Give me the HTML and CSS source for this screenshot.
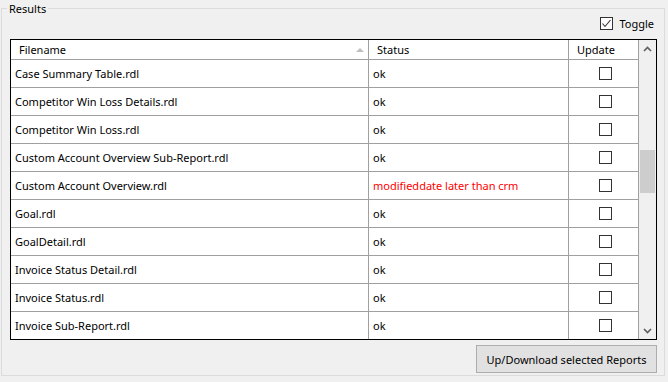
FILE: index.html
```html
<!DOCTYPE html>
<html lang="en">
<head>
    <meta charset="UTF-8">
    <meta name="viewport" content="width=device-width, initial-scale=1.0">
    <title>Results</title>
    <link rel="stylesheet" href="styles.css">
</head>
<body>

    <div class="page">
        <fieldset class="results">
            <legend>Results</legend>

            <div class="toggle-row">
                <label class="toggle">
                    <span class="check">
                        <svg width="11" height="11" viewBox="0 0 11 11"><polyline points="1.5,5.5 4,8.5 9.5,2" fill="none" stroke="#333" stroke-width="1.1"/></svg>
                    </span>
                    <span>Toggle</span>
                </label>
            </div>

            <div class="grid">
                <div class="table">
                    <div class="row head">
                        <div class="cell name"><span>Filename</span><span class="sort"></span></div>
                        <div class="cell status">Status</div>
                        <div class="cell update">Update</div>
                    </div>
                    <div class="row">
                        <div class="cell name">Case Summary Table.rdl</div>
                        <div class="cell status">ok</div>
                        <div class="cell update"><span class="check"></span></div>
                    </div>
                    <div class="row">
                        <div class="cell name">Competitor Win Loss Details.rdl</div>
                        <div class="cell status">ok</div>
                        <div class="cell update"><span class="check"></span></div>
                    </div>
                    <div class="row">
                        <div class="cell name">Competitor Win Loss.rdl</div>
                        <div class="cell status">ok</div>
                        <div class="cell update"><span class="check"></span></div>
                    </div>
                    <div class="row">
                        <div class="cell name">Custom Account Overview Sub-Report.rdl</div>
                        <div class="cell status">ok</div>
                        <div class="cell update"><span class="check"></span></div>
                    </div>
                    <div class="row">
                        <div class="cell name">Custom Account Overview.rdl</div>
                        <div class="cell status error">modifieddate later than crm</div>
                        <div class="cell update"><span class="check"></span></div>
                    </div>
                    <div class="row">
                        <div class="cell name">Goal.rdl</div>
                        <div class="cell status">ok</div>
                        <div class="cell update"><span class="check"></span></div>
                    </div>
                    <div class="row">
                        <div class="cell name">GoalDetail.rdl</div>
                        <div class="cell status">ok</div>
                        <div class="cell update"><span class="check"></span></div>
                    </div>
                    <div class="row">
                        <div class="cell name">Invoice Status Detail.rdl</div>
                        <div class="cell status">ok</div>
                        <div class="cell update"><span class="check"></span></div>
                    </div>
                    <div class="row">
                        <div class="cell name">Invoice Status.rdl</div>
                        <div class="cell status">ok</div>
                        <div class="cell update"><span class="check"></span></div>
                    </div>
                    <div class="row">
                        <div class="cell name">Invoice Sub-Report.rdl</div>
                        <div class="cell status">ok</div>
                        <div class="cell update"><span class="check"></span></div>
                    </div>
                </div>

                <div class="scrollbar">
                    <div class="arrow">
                        <svg width="9" height="6" viewBox="0 0 9 6"><polyline points="1,5 4.5,1.5 8,5" fill="none" stroke="#606060" stroke-width="1.7"/></svg>
                    </div>
                    <div class="track"><div class="thumb"></div></div>
                    <div class="arrow">
                        <svg width="9" height="6" viewBox="0 0 9 6"><polyline points="1,1 4.5,4.5 8,1" fill="none" stroke="#606060" stroke-width="1.7"/></svg>
                    </div>
                </div>
            </div>

            <div class="actions">
                <button class="btn">Up/Download selected Reports</button>
            </div>
        </fieldset>
    </div>

</body>
</html>
```

FILE: styles.css
```css
body{
    margin:0;
    background:#f0f0f0;
    font-family:"Segoe UI", "Noto Sans", sans-serif;
    font-size:11px;
    color:#000;
}

.page{
    padding:0 3px 0 1px;
}

/* group box */
.results{
    margin:0;
    width:664px;
    height:376px;
    box-sizing:border-box;
    border:1px solid #dcdcdc;
    padding:0 7px 2px 8px;
}

.results legend{
    padding:0 2px;
    margin-left:-3px;
    line-height:17px;
}

.toggle-row{
    display:flex;
    justify-content:flex-end;
    align-items:flex-start;
    height:22px;
    padding-right:3px;
}

.toggle{
    display:flex;
    align-items:center;
    gap:6px;
    height:13px;
}

.check{
    display:flex;
    align-items:center;
    justify-content:center;
    width:13px;
    height:13px;
    box-sizing:border-box;
    border:1px solid #333;
    background:#fff;
}

/* data grid */
.grid{
    display:flex;
    border:1px solid #000;
    background:#fff;
}

.table{
    flex:1;
}

.row{
    display:flex;
    height:28px;
    box-sizing:border-box;
    border-bottom:1px solid #a0a0a0;
}

.row:last-child{
    height:27px;
    border-bottom:none;
}

.row.head{
    height:20px;
}

.cell{
    display:flex;
    align-items:center;
    box-sizing:border-box;
    padding-left:4px;
    border-right:1px solid #a0a0a0;
    white-space:nowrap;
}

.head .cell{
    padding-left:8px;
}

.name{ width:358px; }
.status{ width:200px; }
.update{ width:70px; }

.update .check{
    margin:0 auto;
}

.head .name{
    justify-content:space-between;
    padding-right:4px;
}

.sort{
    width:0;
    height:0;
    border-left:4px solid transparent;
    border-right:4px solid transparent;
    border-bottom:4px solid #bfbfbf;
}

.error{
    color:#ff0000;
}

.scrollbar{
    width:17px;
    display:flex;
    flex-direction:column;
    background:#f0f0f0;
}

.arrow{
    height:17px;
    display:flex;
    align-items:center;
    justify-content:center;
}

.track{
    flex:1;
}

.thumb{
    margin:93px 1px 0 1px;
    height:43px;
    background:#cdcdcd;
}

.actions{
    display:flex;
    justify-content:flex-end;
    margin-top:5px;
}

.btn{
    width:181px;
    height:28px;
    padding:0;
    background:#e1e1e1;
    border:1px solid #adadad;
    font-family:inherit;
    font-size:11px;
    color:#000;
}
```
